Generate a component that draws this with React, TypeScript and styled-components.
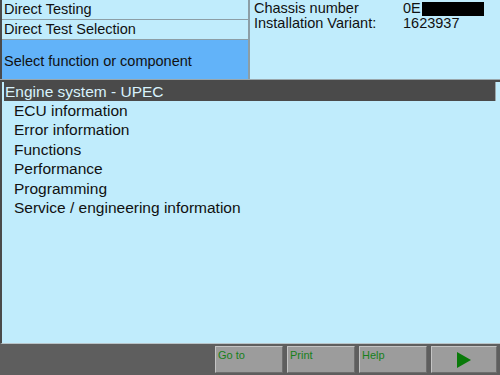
import React from "react";
import styled, { createGlobalStyle } from "styled-components";

const Global = createGlobalStyle`
  html, body { margin: 0; padding: 0; background: #5e5e5e; }
  body { font-family: "Liberation Sans", Arial, sans-serif; }
  * { box-sizing: border-box; }
`;

const Screen = styled.div`
  width: 500px;
  height: 375px;
  display: flex;
  flex-direction: column;
  overflow: hidden;
  background: #5e5e5e;
  color: #111;
`;

const Header = styled.div`
  height: 80px;
  display: grid;
  grid-template-columns: 248px 2px 1fr;
  border-bottom: 1px solid #9aa6aa;
  background: #c0ecfc;
`;

const LeftPanel = styled.div`
  display: flex;
  flex-direction: column;
  border-left: 2px solid #4a4a4a;
`;

const TitleRow = styled.div`
  height: 20px;
  padding: 0 0 0 2px;
  font-size: 14.5px;
  line-height: 19px;
  border-bottom: 1px solid #8c9ea6;
  background: #c0ecfc;
  white-space: nowrap;
`;

const Instruction = styled.div`
  flex: 1;
  display: flex;
  align-items: center;
  padding: 3px 0 0 2px;
  font-size: 14.5px;
  background: #62b3f9;
`;

const Divider = styled.div`
  background: #8c9ea6;
`;

const InfoPanel = styled.div`
  padding: 1px 0 0 4px;
  display: grid;
  grid-template-columns: 149px 1fr;
  grid-auto-rows: 15px;
  align-content: start;
  font-size: 14.5px;
  line-height: 15px;
`;

const Value = styled.span`
  display: flex;
  align-items: center;
`;

const Redacted = styled.span`
  display: inline-block;
  width: 62px;
  height: 14px;
  background: #000;
  margin-left: 1px;
`;

const List = styled.div`
  flex: 1;
  background: #c0ecfc;
  border-left: 2px solid #4a4a4a;
  border-top: 2px solid #4a4a4a;
  border-bottom: 1px solid #b9c4c8;
  padding: 0 4px 0 2px;
  display: flex;
  flex-direction: column;
`;

const Item = styled.div<{ $selected?: boolean; $indent?: boolean }>`
  height: ${(p) => (p.$selected ? "19px" : "19.4px")};
  line-height: ${(p) => (p.$selected ? "19px" : "19.4px")};
  font-size: 15.5px;
  white-space: nowrap;
  padding-left: ${(p) => (p.$indent ? "10px" : "1px")};
  background: ${(p) => (p.$selected ? "#4a4a4a" : "transparent")};
  color: ${(p) => (p.$selected ? "#d8f2fc" : "#111")};
  border-right: ${(p) => (p.$selected ? "1px solid #9aa6aa" : "none")};
`;

const Footer = styled.div`
  height: 31px;
  display: flex;
  justify-content: flex-end;
  align-items: center;
  gap: 4px;
  padding: 0 3px 0 0;
  background: #5e5e5e;
`;

const Button = styled.div<{ $wide?: boolean }>`
  width: ${(p) => (p.$wide ? "66px" : "68px")};
  height: 27px;
  background: #9c9c9c;
  border-top: 1px solid #c4c4c4;
  border-left: 1px solid #c4c4c4;
  border-right: 1px solid #6e6e6e;
  border-bottom: 1px solid #6e6e6e;
  color: #17801a;
  font-size: 11px;
  padding: 2px 0 0 2px;
  display: flex;
  align-items: flex-start;
  justify-content: flex-start;
`;

const ArrowButton = styled(Button)`
  align-items: center;
  justify-content: center;
  padding: 0;
`;

const items = [
  "ECU information",
  "Error information",
  "Functions",
  "Performance",
  "Programming",
  "Service / engineering information",
];

export default function App() {
  return (
    <Screen>
      <Global />
      <Header>
        <LeftPanel>
          <TitleRow>Direct Testing</TitleRow>
          <TitleRow>Direct Test Selection</TitleRow>
          <Instruction>Select function or component</Instruction>
        </LeftPanel>
        <Divider />
        <InfoPanel>
          <span>Chassis number</span>
          <Value>
            0E<Redacted />
          </Value>
          <span>Installation Variant:</span>
          <Value>1623937</Value>
        </InfoPanel>
      </Header>
      <List>
        <Item $selected>Engine system - UPEC</Item>
        {items.map((t) => (
          <Item key={t} $indent>
            {t}
          </Item>
        ))}
      </List>
      <Footer>
        <Button>Go to</Button>
        <Button>Print</Button>
        <Button>Help</Button>
        <ArrowButton $wide>
          <svg width="16" height="16" viewBox="0 0 16 16">
            <polygon points="1,0 15,8 1,16" fill="#0a7a0a" />
          </svg>
        </ArrowButton>
      </Footer>
    </Screen>
  );
}
